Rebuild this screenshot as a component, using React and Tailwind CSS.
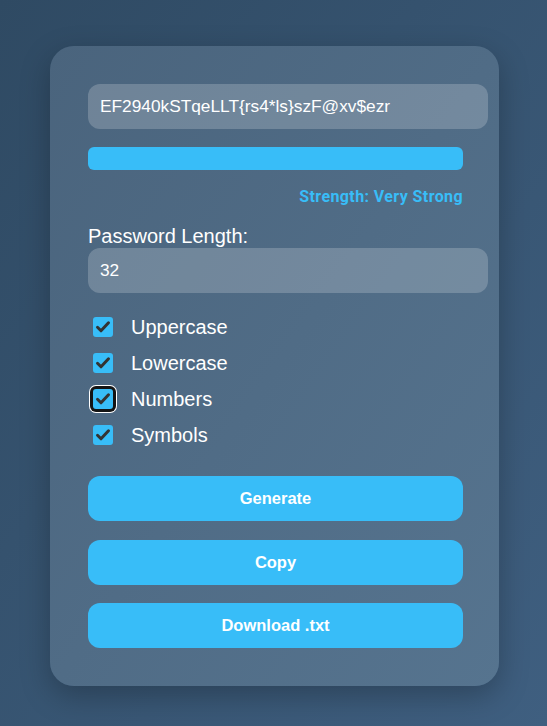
import React from "react";

function Check({ focused }) {
  return (
    <div
      className={
        "w-5 h-5 rounded-[3px] bg-[#38bdf8] flex items-center justify-center ml-[5px] " +
        (focused ? "shadow-[0_0_0_3px_#141414,0_0_0_4px_#ffffff]" : "")
      }
    >
      <svg width="18" height="18" viewBox="0 0 18 18" fill="none">
        <path d="M3.5 9.3 L7 12.8 L14.5 4.8" stroke="#333333" strokeWidth="3" strokeLinecap="round" strokeLinejoin="round" />
      </svg>
    </div>
  );
}

export default function App() {
  const opts = ["Uppercase", "Lowercase", "Numbers", "Symbols"];
  return (
    <div className="w-[547px] h-[726px] overflow-hidden bg-gradient-to-br from-[#2f4a63] to-[#3f5f80] pt-[46px] font-['Liberation_Sans',Arial,sans-serif]">
      <div className="ml-[50px] w-[449px] rounded-[24px] bg-gradient-to-br from-[#4a647d] to-[#56748f] pt-[38px] pb-[38px] pl-[38px] pr-[36px] shadow-[0_10px_30px_rgba(0,0,0,0.25)]">
        <div className="w-[400px] h-[45px] rounded-xl bg-white/20 px-3 flex items-center text-[17.3px] text-white">
          EF2940kSTqeLLT{"{"}rs4*ls{"}"}szF@xv$ezr
        </div>
        <div className="mt-[18px] h-[23px] w-full rounded-md bg-[#38bdf8]"></div>
        <div className="mt-[18px] leading-[18px] text-right text-[16px] font-bold text-[#38bdf8] tracking-[0.4px] font-['Roboto',sans-serif]">
          Strength: Very Strong
        </div>
        <div className="mt-[20px] leading-[21px] text-[20px] text-white">Password Length:</div>
        <div className="mt-px w-[400px] h-[45px] rounded-xl bg-white/20 px-3 flex items-center text-[17.3px] text-white">
          32
        </div>
        <div className="mt-[16px] flex flex-col">
          {opts.map((o) => (
            <div key={o} className="h-[36px] flex items-center">
              <Check focused={o === "Numbers"} />
              <span className="ml-[18px] text-[20px] text-white">{o}</span>
            </div>
          ))}
        </div>
        <div className="mt-[23px] h-[45px] rounded-xl bg-[#38bdf8] flex items-center justify-center text-white font-bold text-[16.5px]">
          Generate
        </div>
        <div className="mt-[19px] h-[45px] rounded-xl bg-[#38bdf8] flex items-center justify-center text-white font-bold text-[16.5px]">
          Copy
        </div>
        <div className="mt-[18px] h-[45px] rounded-xl bg-[#38bdf8] flex items-center justify-center text-white font-bold text-[16.5px]">
          Download .txt
        </div>
      </div>
    </div>
  );
}
